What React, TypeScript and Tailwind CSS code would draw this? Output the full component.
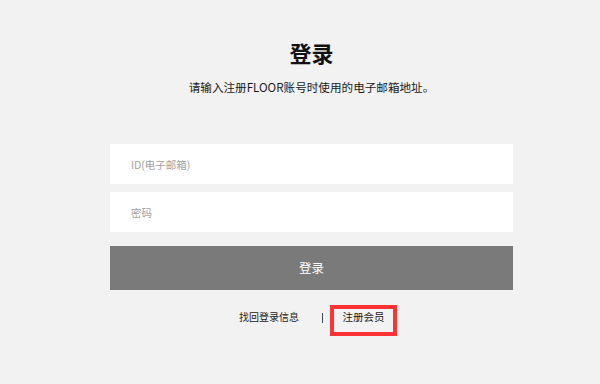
export default function App() {
  return (
    <div
      className="w-[600px] h-[384px] bg-[#f2f2f2] overflow-hidden"
      style={{ fontFamily: '"Noto Sans CJK SC", "Noto Sans", sans-serif' }}
    >
      <div className="ml-[110px] w-[403px] pt-[41px] flex flex-col">
        <h1 className="text-center text-[22px] leading-[22px] font-bold text-[#111]">登录</h1>
        <p className="mt-[18px] text-center text-[11.6px] leading-[12px] text-[#1a1a1a]">
          请输入注册FLOOR账号时使用的电子邮箱地址。
        </p>

        <input
          className="mt-[51px] h-10 w-full bg-white pl-[21px] text-[10.5px] text-[#333] placeholder:text-[#a0a0a0] outline-none"
          placeholder="ID(电子邮箱)"
        />
        <input
          type="password"
          className="mt-2 h-10 w-full bg-white pl-[21px] text-[10.5px] text-[#333] placeholder:text-[#a0a0a0] outline-none"
          placeholder="密码"
        />

        <button className="mt-[14px] h-11 w-full bg-[#7a7a7a] text-[12.5px] text-white">登录</button>

        {/* 底部链接 */}
        <div className="mt-[15px] flex items-start">
          <a className="ml-[129px] mt-[7px] w-[62px] text-[10px] leading-[10px] text-[#1a1a1a] whitespace-nowrap">
            找回登录信息
          </a>
          <span className="ml-[21px] mt-[8px] h-[10px] w-px bg-[#3d4b5c]" />
          <a className="ml-[7px] h-[31px] w-[67px] border-4 border-[#ff3333] pt-[3px] text-center text-[10.5px] leading-[10px] text-[#1a1a1a] whitespace-nowrap">
            注册会员
          </a>
        </div>
      </div>
    </div>
  );
}
